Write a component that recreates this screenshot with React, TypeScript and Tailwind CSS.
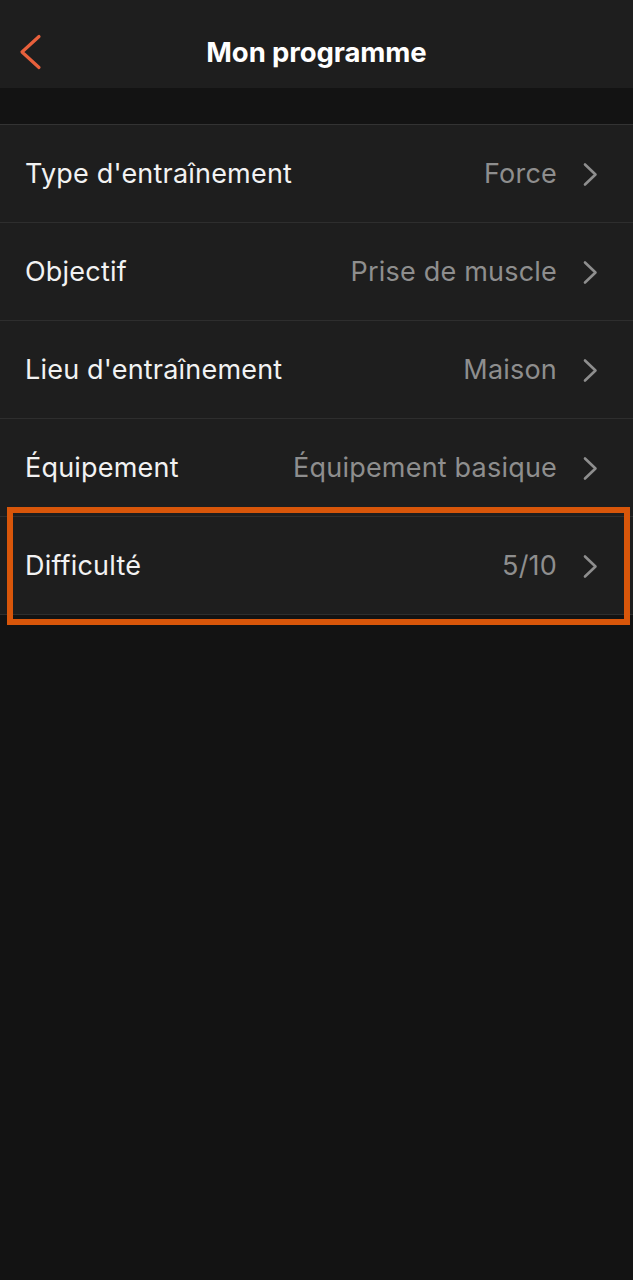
const rows = [
  { label: "Type d'entraînement", value: "Force" },
  { label: "Objectif", value: "Prise de muscle" },
  { label: "Lieu d'entraînement", value: "Maison" },
  { label: "Équipement", value: "Équipement basique" },
  { label: "Difficulté", value: "5/10", highlight: true },
];

function Chevron() {
  return (
    <svg width="17" height="25" viewBox="0 0 17 25" fill="none" className="ml-[25px] shrink-0">
      <path d="M3 2.5 L13.5 12.5 L3 22.5" stroke="#8e8e8e" strokeWidth="2.6" strokeLinecap="round" strokeLinejoin="round" />
    </svg>
  );
}

export default function App() {
  return (
    <div className="min-h-[1280px] w-full bg-[#131313] font-['Inter',sans-serif]">
      <header className="relative flex h-[88px] items-center justify-center bg-[#1e1e1e] pt-[17px]">
        <svg width="26" height="38" viewBox="0 0 26 38" fill="none" className="absolute left-[17px] top-[33px]">
          <path d="M22 3.5 L5 19 L22 34.5" stroke="#e8603c" strokeWidth="3.2" strokeLinecap="round" strokeLinejoin="round" />
        </svg>
        <h1 className="text-[27.5px] font-bold tracking-[-0.1px] text-white">Mon programme</h1>
      </header>

      <div className="mt-[36px] border-t border-[#333333] bg-[#1e1e1e]">
        {rows.map((row) => (
          <div key={row.label} className="relative">
            <div className="flex h-[98px] items-center border-b border-[#2e2e2e] pl-[25px] pr-[34px] pt-[2px]">
              <span className="text-[27px] tracking-[0.2px] text-[#f2f2f2]">{row.label}</span>
              <span className="ml-auto text-[27px] tracking-[0.2px] text-[#8e8e8e]">{row.value}</span>
              <Chevron />
            </div>
            {row.highlight && (
              <div className="pointer-events-none absolute left-[7px] right-[3px] top-[-10px] bottom-[-10px] border-[6px] border-[#d8560a]" />
            )}
          </div>
        ))}
      </div>
    </div>
  );
}
